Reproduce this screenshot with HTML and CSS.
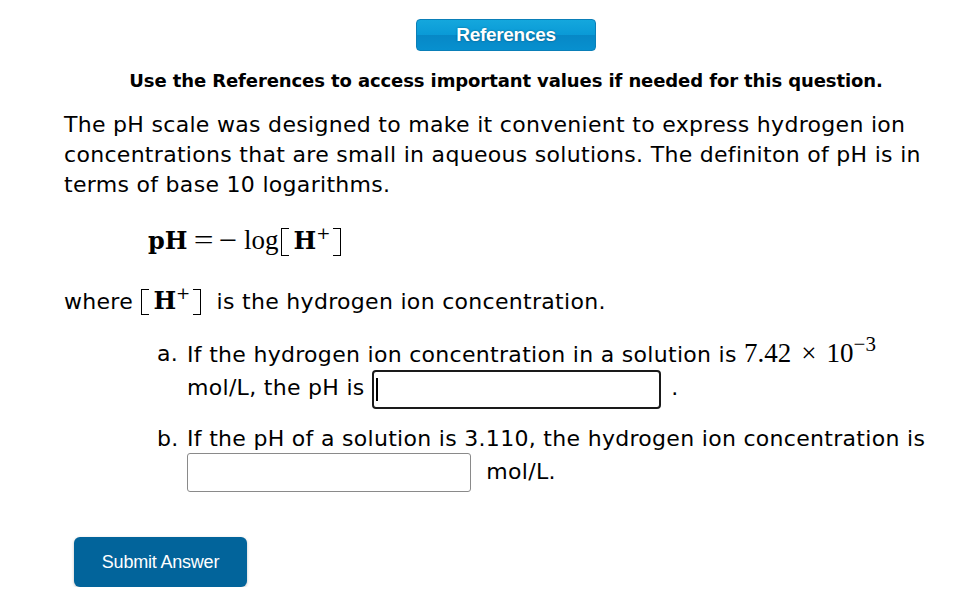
FILE: index.html
```html
<!DOCTYPE html>
<html lang="en">
<head>
  <meta charset="UTF-8">
  <title>pH Question</title>
  <link rel="stylesheet" href="styles.css">
</head>
<body>
  <div class="question">
    <div class="refs">
      <button class="refs-button">References</button>
    </div>
    <p class="notice">Use the References to access important values if needed for this question.</p>

    <p class="intro">The pH scale was designed to make it convenient to express hydrogen ion concentrations that are small in aqueous solutions. The definiton of pH is in terms of base 10 logarithms.</p>

    <div class="equation">
      <span class="math"><b>pH</b><span class="op">=</span><span class="minus">&minus;</span>log<span class="brk brk-l"></span><b>H</b><sup>+</sup><span class="brk brk-r"></span></span>
    </div>

    <p class="where">where <span class="math small"><span class="brk brk-l"></span><b>H</b><sup>+</sup><span class="brk brk-r"></span></span> is the hydrogen ion concentration.</p>

    <div class="parts">
      <div class="part">
        <span class="label">a.</span>
        <div class="body">
          If the hydrogen ion concentration in a solution is <span class="math num">7.42<span class="op">&times;</span>10<sup>&minus;3</sup></span>
          mol/L, the pH is <span class="field"><input type="text" class="answer focused" value=""><span class="caret"></span></span> .
        </div>
      </div>
      <div class="part">
        <span class="label">b.</span>
        <div class="body">
          If the pH of a solution is 3.110, the hydrogen ion concentration is
          <input type="text" class="answer"> mol/L.
        </div>
      </div>
    </div>

    <button class="submit">Submit Answer</button>
  </div>
</body>
</html>
```

FILE: styles.css
```css
/* Page */
body {
  margin: 0;
  background: #ffffff;
  color: #000000;
  font-family: "DejaVu Sans", Verdana, sans-serif;
}

.question {
  width: 876px;
  padding: 19px 0 0 64px;
}

/* References bar */
.refs {
  display: flex;
  justify-content: center;
  padding-left: 8px;
}

.refs-button {
  width: 180px;
  height: 32px;
  border: 1px solid #0a7fb8;
  border-radius: 4px;
  background: linear-gradient(#14a7dd, #0a9ad6 50%, #0788c6 51%, #0790cf);
  color: #ffffff;
  font-family: "Liberation Sans", Arial, sans-serif;
  font-weight: bold;
  font-size: 19px;
  letter-spacing: -0.3px;
  text-shadow: 0 0 2px rgba(0, 0, 0, 0.4);
}

.notice {
  margin: 19px 0 0;
  padding-left: 8px;
  text-align: center;
  font-weight: bold;
  font-size: 18px;
  letter-spacing: -0.1px;
  line-height: 22px;
}

.intro {
  margin: 18px 0 0;
  font-size: 22px;
  letter-spacing: 0.3px;
  line-height: 30px;
}

/* Math */
.math {
  font-family: "Liberation Serif", "DejaVu Serif", serif;
  font-size: 27px;
  letter-spacing: 0;
}

.math b {
  font-family: "DejaVu Serif", serif;
  font-size: 24px;
}

.math sup {
  font-family: "DejaVu Serif", serif;
  font-size: 17px;
  vertical-align: 10px;
  line-height: 0;
}

.brk {
  display: inline-block;
  box-sizing: border-box;
  width: 8px;
  height: 28px;
  border: 1.5px solid #000;
  vertical-align: -7px;
}

.brk-l {
  border-right: none;
  margin: 0 4px 0 3px;
}

.brk-r {
  border-left: none;
  margin: 0 0 0 3px;
}

.op {
  display: inline-block;
  padding: 0 9px;
  transform: scaleX(1.3);
}

.minus {
  display: inline-block;
  padding-right: 8px;
  transform: scaleX(1.2);
}

.equation {
  margin: 20px 0 0 84px;
  height: 40px;
  line-height: 40px;
}

.where {
  margin: 23px 0 0;
  font-size: 22px;
  letter-spacing: 0.3px;
  line-height: 34px;
}

.math.small .brk {
  height: 26px;
  vertical-align: -6px;
}

.math.small .brk-l {
  margin-left: 1px;
}

.math.small .brk-r {
  margin-right: 8px;
}

/* Parts */
.parts {
  margin: 18px 0 0 93px;
  font-size: 22px;
  letter-spacing: 0.3px;
}

.part {
  display: flex;
  line-height: 33px;
}

.part + .part {
  margin-top: 16px;
}

.label {
  width: 30px;
  flex-shrink: 0;
}

.num {
  font-size: 27px;
}

.num .op {
  padding: 0 10px;
  transform: none;
}

.num sup {
  font-family: "Liberation Serif", serif;
  font-size: 21px;
  vertical-align: 11px;
}

.answer {
  box-sizing: border-box;
  width: 284px;
  height: 39px;
  margin: -3px 8px -3px 0;
  padding: 0 6px;
  border: 1px solid #8a8a8a;
  border-radius: 3px;
  vertical-align: middle;
  font-size: 18px;
  font-family: "DejaVu Sans", Verdana, sans-serif;
}

/* focused field with its text cursor */
.field {
  position: relative;
  display: inline-block;
  height: 39px;
  margin: -3px 3px -3px 0;
  vertical-align: middle;
}

.answer.focused {
  width: 289px;
  margin: 0;
  vertical-align: top;
  border: 2px solid #1a1a1a;
  border-radius: 4px;
  outline: none;
}

.caret {
  position: absolute;
  left: 4px;
  top: 8px;
  width: 2px;
  height: 23px;
  background: #000;
}

.submit {
  margin: 48px 0 0 10px;
  width: 173px;
  height: 50px;
  border: none;
  border-radius: 6px;
  background-color: #02649b;
  color: #ffffff;
  font-family: "Liberation Sans", Arial, sans-serif;
  font-size: 18px;
  letter-spacing: -0.2px;
  box-shadow: 0 1px 3px rgba(0, 0, 0, 0.25);
}
```
